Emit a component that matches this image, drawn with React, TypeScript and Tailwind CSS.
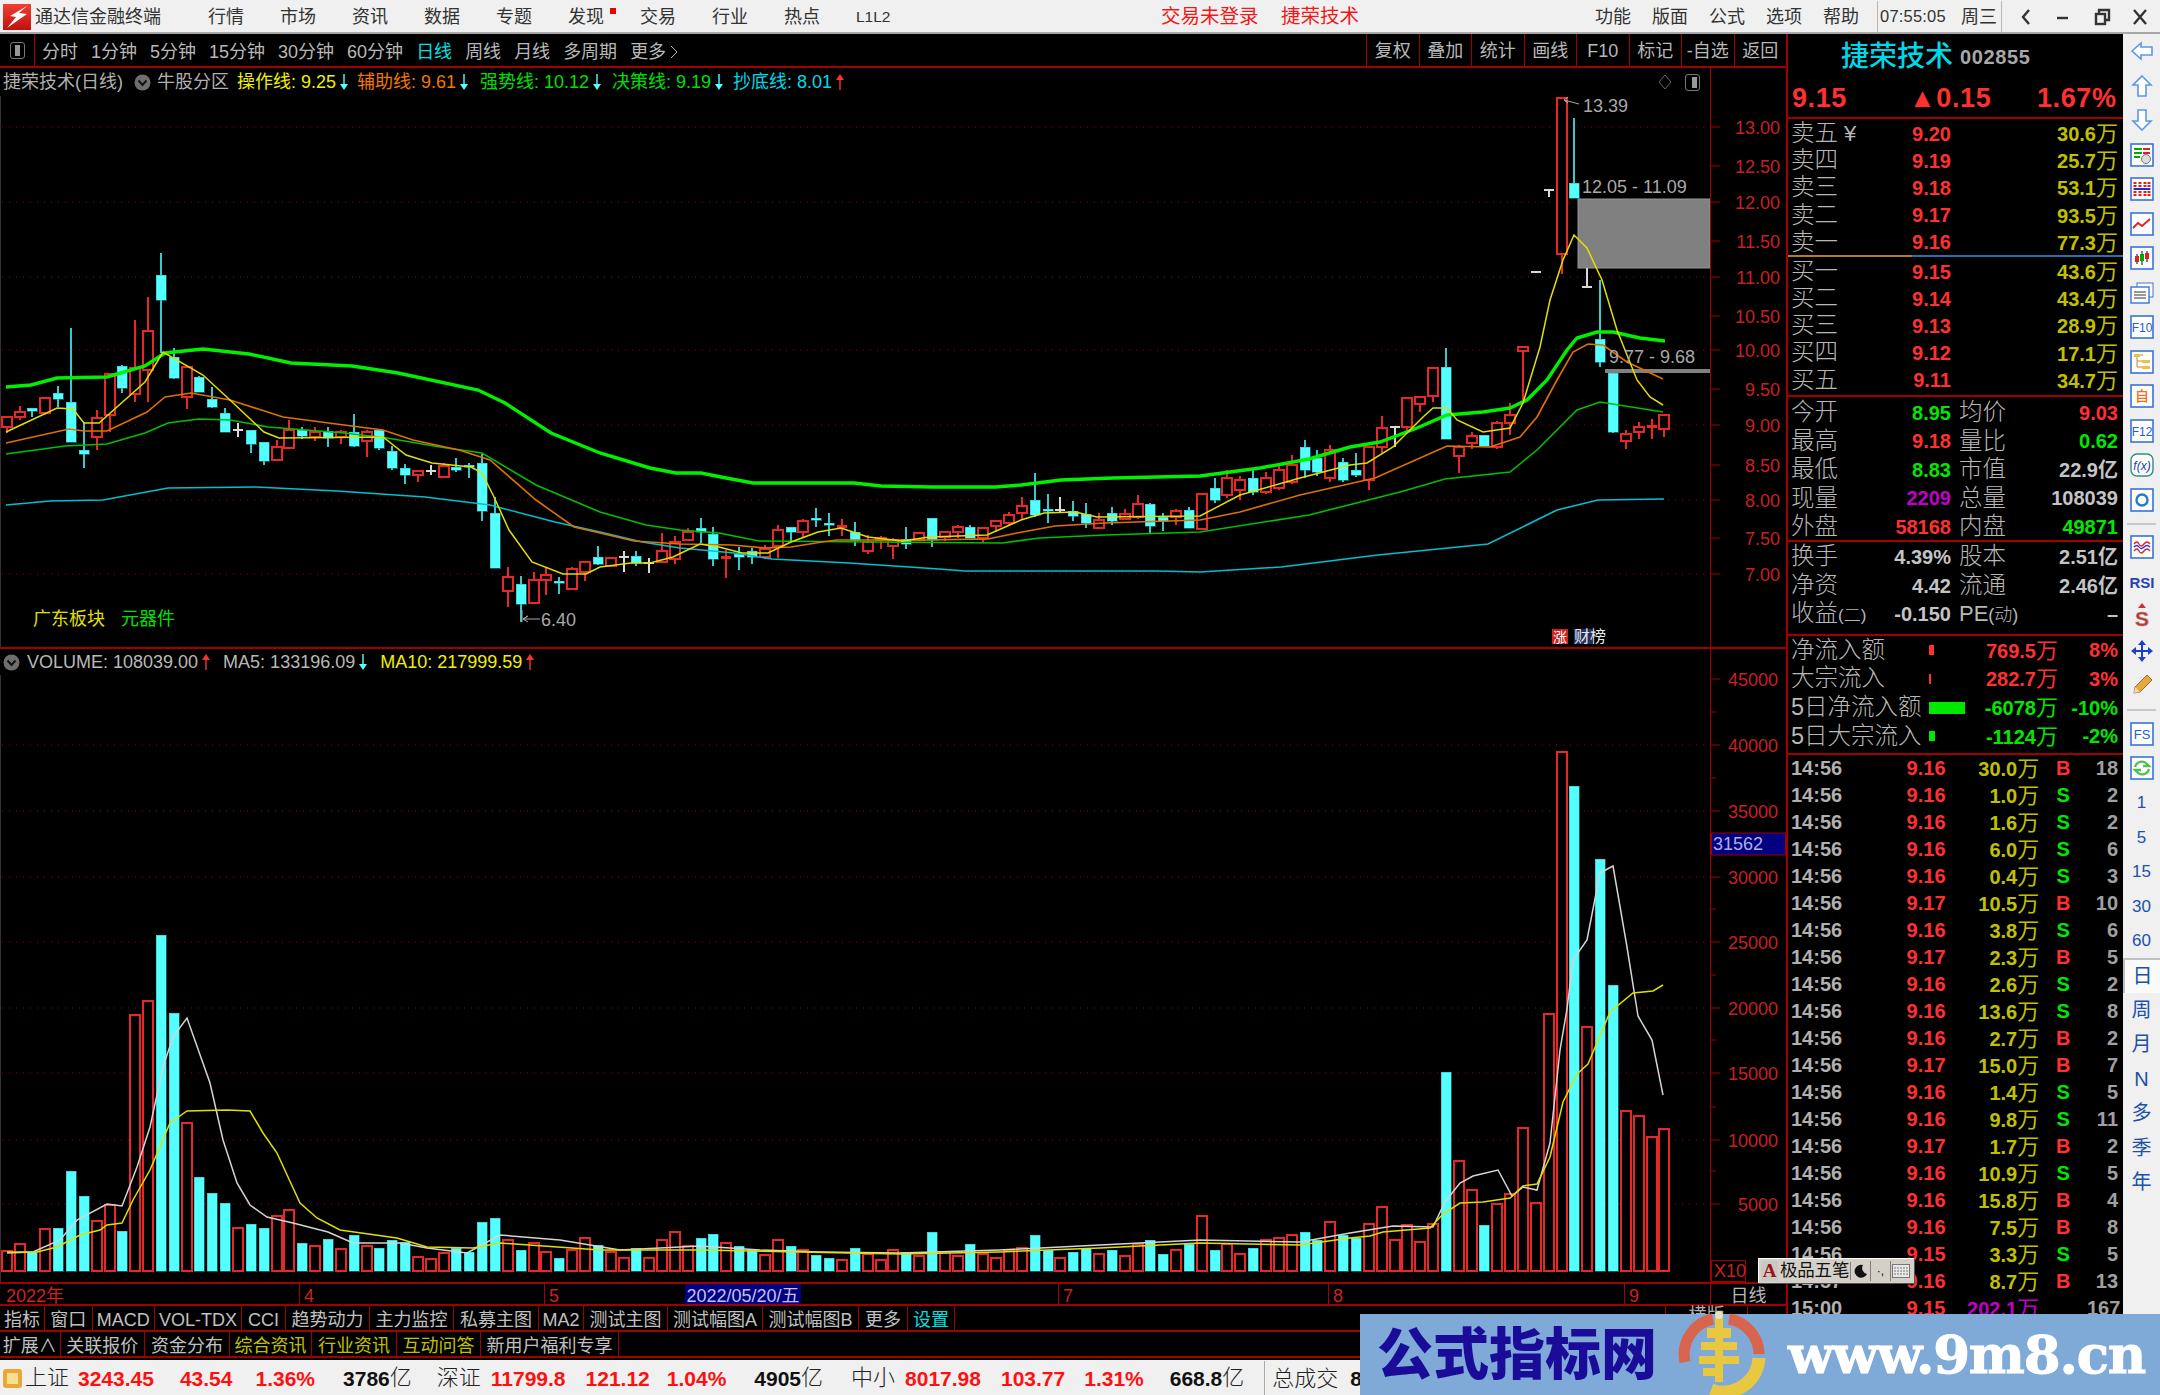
import { ReactNode } from "react";

// [kind, bodyTop, bodyBottom, high, low] in page pixels. r hollow red, c cyan, w white doji, f red filled
type Candle = [string, number, number, number, number];
const candles: Candle[] = [
  ["r",417,427,417,433],["r",412,417,406,420],["c",408,411,408,417],["r",398,413,397,415],["c",393,399,386,407],
  ["c",402,442,328,442],["c",450,454,422,468],["r",418,437,410,450],["r",374,415,374,432],["c",366,388,365,393],
  ["r",368,394,320,402],["r",331,370,297,402],["c",275,300,253,353],["c",357,378,348,379],["r",367,397,367,409],
  ["c",377,392,376,392],["c",399,407,387,408],["c",413,432,408,432],["w",430,430,423,437],["c",430,444,430,453],
  ["c",442,461,442,465],["r",447,460,440,460],["r",430,448,420,448],["c",430,436,427,439],["r",432,437,427,441],
  ["c",431,438,427,447],["r",432,437,430,444],["c",432,446,414,447],["r",432,441,430,457],["c",430,448,429,450],
  ["c",451,468,446,470],["c",468,475,464,484],["r",471,475,471,482],["w",471,471,465,475],["r",466,477,463,477],
  ["c",467,470,458,472],["c",465,466,463,478],["c",463,511,454,521],["c",513,568,497,568],["r",577,591,567,607],
  ["c",584,604,576,622],["r",580,603,572,603],["r",575,580,568,595],["c",581,583,577,594],["r",569,589,567,589],
  ["r",562,572,562,581],["c",557,564,546,565],["r",558,566,558,566],["w",557,557,551,572],["c",556,563,551,566],
  ["w",563,563,558,573],["r",551,562,533,562],["r",542,559,536,564],["r",532,540,528,540],["c",528,532,518,543],
  ["c",534,559,527,566],["f",556,558,550,578],["c",554,557,547,570],["c",551,557,548,564],["r",549,557,545,559],
  ["r",530,546,525,558],["c",527,532,527,542],["r",521,532,519,538],["c",518,519,508,527],["c",523,525,513,536],
  ["f",525,527,519,536],["c",532,540,522,546],["r",542,551,535,554],["r",538,540,536,549],["r",540,546,538,559],
  ["c",539,544,527,549],["r",533,540,533,541],["c",518,540,518,547],["r",532,537,532,541],["r",527,532,525,538],
  ["c",527,538,525,538],["r",528,538,528,543],["r",521,526,521,532],["r",515,523,512,526],["r",506,513,497,520],
  ["c",500,515,473,517],["c",509,511,494,523],["w",510,510,497,513],["c",511,516,501,521],["c",514,523,503,528],
  ["r",520,528,513,528],["c",513,521,507,525],["r",514,519,509,519],["r",504,517,495,519],["c",504,526,503,533],
  ["c",517,521,513,531],["r",511,517,509,525],["c",510,528,507,528],["r",494,529,494,529],["c",488,500,478,503],
  ["r",478,495,470,498],["r",480,490,476,500],["c",478,492,470,495],["r",478,492,472,494],["r",470,488,465,490],
  ["r",465,482,455,484],["c",447,470,440,478],["c",458,472,450,476],["r",450,478,445,482],["c",462,480,458,482],
  ["c",470,475,453,477],["r",447,480,447,490],["r",428,447,416,453],["w",427,427,426,447],["r",398,427,398,432],
  ["r",397,404,397,412],["r",368,396,368,402],["c",367,439,348,439],["r",447,456,445,473],["r",436,443,432,449],
  ["c",435,446,435,446],["r",423,447,421,449],["r",415,423,403,435],["r",347,351,347,400],["w",272,272,272,272],
  ["w",190,190,190,197],["r",98,254,98,274],["c",183,198,118,198],["w",287,287,268,287],["c",339,362,280,367],
  ["c",373,432,373,433],["r",434,441,430,449],["r",427,432,422,439],["f",425,427,419,439],["r",415,429,415,437],
];

// tops of the volume bars, one per candle
const volTops = [
  1251,1244,1252,1229,1228,1171,1196,1221,1205,1231,1015,1001,935,1013,1123,1177,1193,1203,1228,1224,
  1228,1216,1210,1243,1246,1239,1249,1235,1246,1248,1240,1242,1257,1259,1253,1248,1252,1222,1218,
  1240,1250,1243,1252,1258,1250,1238,1245,1252,1258,1248,1258,1240,1232,1246,1238,1234,1243,1246,1250,1255,
  1240,1246,1250,1255,1258,1260,1248,1254,1260,1250,1252,1256,1232,1252,1256,1244,1254,1258,1250,1248,1235,
  1250,1258,1252,1248,1254,1250,1256,1244,1240,1254,1250,1244,1216,1250,1244,1254,1248,1240,1238,1235,1232,
  1240,1222,1235,1238,1224,1207,1240,1225,1242,1224,1072,1161,1190,1225,1204,1194,1128,1203,1014,752,786,
  1027,859,985,1111,1116,1137,1129,
];

const brightGreen = [6,387,31,385,57,378,107,377,145,366,165,353,203,349,249,354,291,363,352,366,398,373,478,390,505,403,551,433,600,453,650,468,676,473,701,473,726,478,753,483,778,483,803,483,854,483,881,486,932,487,996,487,1021,485,1061,480,1113,478,1200,476,1260,468,1309,459,1350,447,1380,442,1417,428,1447,415,1483,412,1510,408,1527,400,1547,380,1567,350,1577,338,1597,332,1613,332,1640,338,1665,341];
const orangeLine = [6,443,69,429,84,431,107,431,147,412,165,397,191,393,230,400,283,417,344,425,383,430,413,440,459,450,490,460,536,500,574,527,600,533,634,541,680,544,732,545,765,548,791,547,822,542,837,540,925,540,988,539,1017,533,1055,526,1105,523,1200,520,1240,512,1300,495,1375,478,1447,446,1490,447,1520,437,1537,417,1557,380,1573,352,1588,344,1603,345,1627,362,1663,379];
const greenLine = [6,454,65,446,107,444,145,433,168,423,199,419,230,420,268,427,344,433,387,438,440,447,482,453,536,485,600,512,646,525,680,530,719,533,759,541,876,542,1002,543,1040,538,1105,535,1200,532,1309,515,1400,492,1445,479,1510,472,1537,450,1577,410,1600,402,1663,412];
const yellowLine = [6,432,57,408,73,409,84,423,99,423,145,382,163,352,203,375,230,400,264,432,279,438,383,437,406,455,432,463,471,467,482,473,494,497,509,530,532,562,563,574,586,574,600,567,631,563,650,563,673,557,700,544,719,547,742,553,768,553,791,542,818,532,841,528,868,537,902,541,929,537,987,535,1021,520,1044,513,1075,512,1097,517,1200,516,1240,495,1300,478,1350,465,1367,463,1393,447,1423,417,1433,408,1447,408,1457,420,1483,432,1510,428,1523,403,1540,347,1550,300,1563,260,1574,235,1587,248,1602,280,1617,330,1637,380,1650,397,1663,405];
const cyanLine = [6,505,50,501,103,500,168,488,256,487,337,491,425,497,490,505,555,522,600,532,642,542,680,548,734,553,772,559,849,563,939,569,965,571,1157,571,1200,572,1281,567,1378,555,1488,544,1557,510,1598,500,1664,499];
const volWhite = [7,1253,33,1252,60,1240,77,1220,107,1204,122,1206,137,1167,150,1127,163,1067,173,1037,187,1018,210,1083,223,1140,237,1183,250,1205,267,1217,293,1223,328,1232,353,1243,400,1243,427,1248,467,1253,500,1235,560,1240,620,1250,700,1246,760,1250,820,1252,900,1253,1000,1250,1100,1245,1200,1240,1300,1242,1350,1233,1393,1226,1433,1227,1445,1202,1460,1183,1473,1176,1498,1170,1512,1196,1523,1187,1537,1190,1550,1143,1560,1050,1567,1009,1573,960,1587,940,1600,873,1613,866,1627,947,1638,1016,1652,1040,1663,1095];
const volYellow = [7,1252,37,1252,57,1247,80,1235,100,1230,107,1225,122,1223,133,1200,150,1170,170,1123,187,1111,227,1110,250,1111,263,1133,277,1153,300,1203,317,1218,340,1230,397,1238,427,1247,473,1248,500,1243,600,1250,700,1250,800,1252,900,1254,1000,1252,1100,1248,1200,1243,1300,1245,1350,1238,1370,1236,1383,1232,1430,1228,1443,1214,1460,1203,1483,1202,1510,1198,1523,1186,1537,1184,1550,1157,1563,1102,1577,1074,1588,1064,1610,1012,1633,993,1653,991,1663,985];

const pts = (a: number[]) => {
  const out: string[] = [];
  for (let i = 0; i < a.length; i += 2) out.push(`${a[i]},${a[i + 1]}`);
  return out.join(" ");
};
const barX = (i: number) => Math.round(6.7 + 12.85 * i);

const RED = "#e82828";
const CYAN = "#54ffff";
const WICK = "#38c8d0";

const priceTicks: [string, number][] = [["13.00",127],["12.50",166],["12.00",202],["11.50",241],["11.00",277],["10.50",316],["10.00",350],["9.50",389],["9.00",425],["8.50",465],["8.00",500],["7.50",538],["7.00",574]];
const volTicks: [string, number][] = [["45000",679],["40000",745],["35000",811],["30000",877],["25000",942],["20000",1008],["15000",1073],["10000",1140],["5000",1204]];

const PriceChart = () => (
  <svg width="1710" height="551" viewBox="0 96 1710 551" className="block">
    <line x1="0.5" x2="0.5" y1="96" y2="647" stroke="#333" />
    {[127, 202, 277, 350, 425, 500, 574].map((y) => (
      <line key={y} x1="2" x2="1710" y1={y} y2={y} stroke="#a00000" strokeDasharray="1 6" />
    ))}
    <rect x="1578" y="199" width="132" height="69" fill="#808080" stroke="#969696" />
    <rect x="1605" y="369" width="105" height="4" fill="#808080" />
    <g shapeRendering="crispEdges">
      {candles.map(([k, top, bot, hi, lo], i) => {
        const x = barX(i);
        const wick = k === "c" ? WICK : k === "w" ? "#d8d8d8" : RED;
        return (
          <g key={i}>
            {hi < lo && <line x1={x} x2={x} y1={hi} y2={lo} stroke={wick} strokeWidth="1.5" />}
            {k === "w" && <line x1={x - 5} x2={x + 5} y1={top} y2={top} stroke={wick} strokeWidth="1.5" />}
            {k === "c" && <rect x={x - 5} y={top} width="10" height={Math.max(bot - top, 2)} fill={CYAN} stroke="#30b0b8" strokeWidth="0.5" />}
            {k === "r" && <rect x={x - 5} y={top} width="10" height={bot - top} fill="#000" stroke={RED} strokeWidth="1.2" />}
            {k === "f" && <rect x={x - 5} y={top} width="10" height={bot - top + 1} fill={RED} />}
          </g>
        );
      })}
    </g>
    <polyline points={pts(cyanLine)} fill="none" stroke="#00c0d0" strokeWidth="1.6" />
    <polyline points={pts(greenLine)} fill="none" stroke="#00c000" strokeWidth="1.6" />
    <polyline points={pts(orangeLine)} fill="none" stroke="#e07000" strokeWidth="1.6" />
    <polyline points={pts(brightGreen)} fill="none" stroke="#00f000" strokeWidth="3.4" />
    <polyline points={pts(yellowLine)} fill="none" stroke="#e0e000" strokeWidth="1.5" />

    <g fontSize="18" fill="#a8a8a8">
      <polyline points="1579,104 1564,100 1568,103 1564,100 1568,97" fill="none" stroke="#a8a8a8" />
      <text x="1583" y="112">13.39</text>
      <text x="1582" y="193">12.05 - 11.09</text>
      <text x="1609" y="363">9.77 - 9.68</text>
      <polyline points="540,619 523,619 528,616 523,619 528,622" fill="none" stroke="#a8a8a8" />
      <line x1="522" x2="522" y1="610" y2="622" stroke="#a8a8a8" />
      <text x="541" y="626">6.40</text>
    </g>
    <text x="33" y="625" fontSize="18" fill="#e0e000">广东板块</text>
    <text x="121" y="625" fontSize="18" fill="#00e000">元器件</text>
    <rect x="1552" y="629" width="16" height="15" fill="#d02020" />
    <text x="1553" y="642" fontSize="14" fill="#fff">涨</text>
    <rect x="1574" y="629" width="18" height="15" fill="#203060" />
    <text x="1574" y="642" fontSize="16" fill="#e8e8e8">财榜</text>
  </svg>
);

const VolumeChart = () => (
  <svg width="1710" height="607" viewBox="0 675 1710 607" className="block">
    <line x1="0.5" x2="0.5" y1="675" y2="1282" stroke="#333" />
    {[745, 811, 877, 942, 1008, 1073, 1140, 1204].map((y) => (
      <line key={y} x1="2" x2="1710" y1={y} y2={y} stroke="#a00000" strokeDasharray="1 6" />
    ))}
    <g shapeRendering="crispEdges">
      {volTops.map((top, i) => {
        const x = barX(i);
        const cyan = candles[i][0] === "c";
        return cyan ? (
          <rect key={i} x={x - 5} y={top} width="10" height={1271 - top} fill={CYAN} stroke="#30b0b8" strokeWidth="0.5" />
        ) : (
          <rect key={i} x={x - 5} y={top} width="10" height={1271 - top} fill="#000" stroke={RED} strokeWidth="1.2" />
        );
      })}
    </g>
    <polyline points={pts(volWhite)} fill="none" stroke="#d4d4d4" strokeWidth="1.5" />
    <polyline points={pts(volYellow)} fill="none" stroke="#e0e000" strokeWidth="1.5" />
  </svg>
);

const PriceAxis = () => (
  <svg width="75" height="579" viewBox="1711 68 75 579" className="block shrink-0 self-start">
    {priceTicks.map(([t, y]) => (
      <g key={t}>
        <line x1="1711" x2="1720" y1={y} y2={y} stroke="#a00000" />
        <text x="1780" y={y + 7} textAnchor="end" fontSize="18" fill="#c82020">{t}</text>
      </g>
    ))}
  </svg>
);

const VolumeAxis = () => (
  <svg width="75" height="633" viewBox="1711 649 75 633" className="block shrink-0 self-start">
    {volTicks.map(([t, y]) => (
      <g key={t}>
        <line x1="1711" x2="1720" y1={y} y2={y} stroke="#a00000" />
        <line x1="1711" x2="1716" y1={y - 33} y2={y - 33} stroke="#a00000" />
        <text x="1778" y={y + 7} textAnchor="end" fontSize="18" fill="#c82020">{t}</text>
      </g>
    ))}
    <rect x="1711.5" y="833" width="74" height="22" fill="#000080" stroke="#a00000" />
    <text x="1713" y="850" fontSize="18" fill="#b0b0e0">31562</text>
    <rect x="1711.5" y="1260.5" width="34" height="21" fill="none" stroke="#a00000" />
    <text x="1714" y="1277" fontSize="18" fill="#c82020">X10</text>
  </svg>
);

const Arrow = ({ up }: { up?: boolean }) => (
  <svg width="10" height="16" viewBox="0 0 10 16" className="mx-[3px] shrink-0">
    {up ? (
      <>
        <line x1="5" x2="5" y1="5" y2="16" stroke="#ff3030" strokeWidth="1.4" />
        <polygon points="5,0 9,6 1,6" fill="#ff3030" />
      </>
    ) : (
      <>
        <line x1="5" x2="5" y1="0" y2="11" stroke={CYAN} strokeWidth="1.4" />
        <polygon points="5,16 9,10 1,10" fill={CYAN} />
      </>
    )}
  </svg>
);

const ChevronDisc = () => (
  <svg width="17" height="17" viewBox="0 0 17 17" className="shrink-0">
    <circle cx="8.5" cy="8.5" r="8" fill="#6e6e6e" />
    <polyline points="4.5,6.5 8.5,11 12.5,6.5" fill="none" stroke="#111" strokeWidth="2" />
  </svg>
);

const indicators: [string, string, string, boolean][] = [
  ["操作线: 9.25", "#f0f000", "w-[120px]", false],
  ["辅助线: 9.61", "#f07800", "w-[123px]", false],
  ["强势线: 10.12", "#00e000", "w-[132px]", false],
  ["决策线: 9.19", "#00e000", "w-[121px]", false],
  ["抄底线: 8.01", "#00d8e8", "w-[112px]", true],
];

const topNav = ["行情", "市场", "资讯", "数据", "专题", "发现", "交易", "行业", "热点", "L1L2"];
const rightNav = ["功能", "版面", "公式", "选项", "帮助"];
const periods = ["分时", "1分钟", "5分钟", "15分钟", "30分钟", "60分钟", "日线", "周线", "月线", "多周期"];
const toolCells = ["复权", "叠加", "统计", "画线", "F10", "标记", "-自选", "返回"];

const tabs1: [string, number, string?][] = [
  ["指标",45],["窗口",47.5],["MACD",62.5],["VOL-TDX",87],["CCI",44],["趋势动力",84],["主力监控",84],["私募主图",85],["MA2",45],["测试主图",84],["测试幅图A",95],["测试幅图B",96],["更多",49],["设置",47,"#00e0e0"],
];
const tabs2: [string, number, string?][] = [
  ["扩展∧",60.5],["关联报价",84.5],["资金分布",85],["综合资讯",82,"#c0c000"],["行业资讯",85,"#c0c000"],["互动问答",84,"#c0c000"],["新用户福利专享",138],
];

const Tabs = ({ items, children }: { items: [string, number, string?][]; children?: ReactNode }) => (
  <div className="flex h-[26px] shrink-0 border-b-2 border-[#a00000] text-[18px] leading-none text-[#c0c0c0]">
    {items.map(([t, w, c]) => (
      <div key={t} style={{ width: w, color: c }} className="flex shrink-0 items-center justify-center border-r border-[#a00000] pt-[4px] whitespace-nowrap">
        {t}
      </div>
    ))}
    {children}
  </div>
);

const asks: [string, string, string][] = [
  ["卖五","9.20","30.6"],["卖四","9.19","25.7"],["卖三","9.18","53.1"],["卖二","9.17","93.5"],["卖一","9.16","77.3"],
];
const bids: [string, string, string][] = [
  ["买一","9.15","43.6"],["买二","9.14","43.4"],["买三","9.13","28.9"],["买四","9.12","17.1"],["买五","9.11","34.7"],
];

const R = "#ff3030";
const G = "#00e800";
const W = "#c4c4c4";
const M = "#c000c8";

const stats: [string, string, string, string, string, string][] = [
  ["今开","8.95",G,"均价","9.03",R],
  ["最高","9.18",R,"量比","0.62",G],
  ["最低","8.83",G,"市值","22.9亿",W],
  ["现量","2209",M,"总量","108039",W],
  ["外盘","58168",R,"内盘","49871",G],
];
const flows: [string, number, number, string, string, string][] = [
  ["净流入额",5,10,"769.5","8%",R],
  ["大宗流入",2,10,"282.7","3%",R],
  ["5日净流入额",36,12,"-6078","-10%",G],
  ["5日大宗流入",6,10,"-1124","-2%",G],
];
const ticks: [string, string, string, string, string][] = [
  ["14:56","9.16","30.0","B","18"],["14:56","9.16","1.0","S","2"],["14:56","9.16","1.6","S","2"],["14:56","9.16","6.0","S","6"],
  ["14:56","9.16","0.4","S","3"],["14:56","9.17","10.5","B","10"],["14:56","9.16","3.8","S","6"],["14:56","9.17","2.3","B","5"],
  ["14:56","9.16","2.6","S","2"],["14:56","9.16","13.6","S","8"],["14:56","9.16","2.7","B","2"],["14:56","9.17","15.0","B","7"],
  ["14:56","9.16","1.4","S","5"],["14:56","9.16","9.8","S","11"],["14:56","9.17","1.7","B","2"],["14:56","9.16","10.9","S","5"],
  ["14:56","9.16","15.8","B","4"],["14:56","9.16","7.5","B","8"],["14:56","9.15","3.3","S","5"],["14:57","9.16","8.7","B","13"],
  ["15:00","9.15","202.1","","167"],
];

const Num = ({ children, color, className }: { children: ReactNode; color: string; className?: string }) => (
  <span style={{ color }} className={`text-[20px] font-bold whitespace-nowrap ${className ?? ""}`}>{children}</span>
);

const Wan = ({ children, color }: { children: ReactNode; color: string }) => (
  <span style={{ color }} className="whitespace-nowrap text-[20px] font-bold">
    {children}
    <span className="text-[22px] font-normal">万</span>
  </span>
);

const Cjk = ({ children }: { children: ReactNode }) => (
  <span className="text-[23.5px] font-light whitespace-nowrap text-[#b8b8b8]">{children}</span>
);

const BookRow = ({ row }: { row: [string, string, string] }) => (
  <div className="flex h-[27.2px] items-center pt-[2px]">
    <span className="w-[110px]">
      <Cjk>
        {row[0]}
        {row[0] === "卖五" && <span className="ml-[6px] text-[22px]">¥</span>}
      </Cjk>
    </span>
    <Num color={R} className="w-[50px] text-right">{row[1]}</Num>
    <span className="flex-1 text-right"><Wan color="#c0c000">{row[2]}</Wan></span>
  </div>
);

const RightPanel = () => (
  <div className="flex h-full w-[337px] shrink-0 flex-col overflow-hidden border-l-2 border-[#a00000] pr-[5px]">
    <div className="-mr-[5px] h-[85px] shrink-0 border-b-2 border-[#a00000] pr-[6px]">
      <div className="mt-[2px] flex h-[42px] items-center pl-[53px]">
        <span className="text-[28px] leading-none font-medium text-[#00d8e8]">捷荣技术</span>
        <span className="ml-[7px] text-[20px] font-bold tracking-[0.6px] text-[#a8a8a8]">002855</span>
      </div>
      <div className="mt-[7px] flex items-center pl-[4px] text-[27px] leading-none font-bold tracking-[0.6px] text-[#ff3030]">
        <span className="w-[117px]">9.15</span>
        <span className="w-[128px]">▲0.15</span>
        <span>1.67%</span>
      </div>
    </div>
    <div className="shrink-0 pl-[3px]">
      {asks.map((r) => <BookRow key={r[0]} row={r} />)}
    </div>
    <div className="-mr-[5px] flex h-[2px] shrink-0">
      <div className="w-[124px] bg-[#b08020]" />
      <div className="flex-1 bg-[#2870b0]" />
    </div>
    <div className="shrink-0 pl-[3px]">
      {bids.map((r) => <BookRow key={r[0]} row={r} />)}
    </div>
    <div className="-mr-[5px] mt-[2px] h-[2px] shrink-0 bg-[#a00000]" />
    <div className="shrink-0 pl-[3px]">
      {stats.map((s) => (
        <div key={s[0]} className="flex h-[28.6px] items-center pt-[3px]">
          <div className="flex w-[160px] items-center justify-between">
            <Cjk>{s[0]}</Cjk>
            <Num color={s[2]}>{s[1]}</Num>
          </div>
          <div className="ml-[8px] flex flex-1 items-center justify-between">
            <Cjk>{s[3]}</Cjk>
            <Num color={s[5]}>{s[4]}</Num>
          </div>
        </div>
      ))}
    </div>
    <div className="-mr-[5px] h-[2px] shrink-0 bg-[#a00000]" />
    <div className="shrink-0 pt-[1px] pb-[5.5px] pl-[3px]">
      <div className="flex h-[28.5px] items-center">
        <div className="flex w-[160px] items-center justify-between">
          <Cjk>换手</Cjk>
          <Num color={W}>4.39%</Num>
        </div>
        <div className="ml-[8px] flex flex-1 items-center justify-between">
          <Cjk>股本</Cjk>
          <Num color={W}>2.51亿</Num>
        </div>
      </div>
      <div className="flex h-[28.5px] items-center">
        <div className="flex w-[160px] items-center justify-between">
          <Cjk>净资</Cjk>
          <Num color={W}>4.42</Num>
        </div>
        <div className="ml-[8px] flex flex-1 items-center justify-between">
          <Cjk>流通</Cjk>
          <Num color={W}>2.46亿</Num>
        </div>
      </div>
      <div className="flex h-[28.5px] items-center">
        <div className="flex w-[160px] items-center justify-between">
          <Cjk>收益<span className="text-[17px]">(二)</span></Cjk>
          <Num color={W}>-0.150</Num>
        </div>
        <div className="ml-[8px] flex flex-1 items-center justify-between">
          <Cjk><span className="text-[22px]">PE</span><span className="text-[18px]">(动)</span></Cjk>
          <Num color={W}>–</Num>
        </div>
      </div>
    </div>
    <div className="-mr-[5px] h-[2px] shrink-0 bg-[#a00000]" />
    <div className="shrink-0 pb-[2px] pl-[3px]">
      {flows.map((f) => (
        <div key={f[0]} className="flex h-[28.7px] items-center">
          <span className="w-[138px]"><Cjk>{f[0]}</Cjk></span>
          <span className="flex w-[46px] items-center">
            <span style={{ width: f[1], height: f[2], background: f[5] }} className="block" />
          </span>
          <span className="w-[83px] text-right"><Wan color={f[5]}>{f[3]}</Wan></span>
          <span className="flex-1 text-right"><Num color={f[5]}>{f[4]}</Num></span>
        </div>
      ))}
    </div>
    <div className="-mr-[5px] h-[2px] shrink-0 bg-[#a00000]" />
    <div className="shrink-0 pl-[3px]">
      {ticks.map((t, i) => (
        <div key={i} className="flex h-[27px] items-center">
          <Num color="#b0b0b0" className="w-[105px]">{t[0]}</Num>
          <Num color={R} className="w-[50px] text-right">{t[1]}</Num>
          <span className="w-[94px] text-right"><Wan color={t[3] ? "#c0c000" : M}>{t[2]}</Wan></span>
          <span style={{ color: t[3] === "B" ? R : G }} className="w-[48px] text-center text-[20px] font-bold">{t[3]}</span>
          <span className="w-[31px] text-right"><Num color="#a0a0a0">{t[4]}</Num></span>
        </div>
      ))}
    </div>
  </div>
);

// sidebar glyph boxes, each 24x24
const BOX = "#3a74d8";
const Box = ({ children }: { children: ReactNode }) => (
  <svg width="24" height="24" viewBox="0 0 24 24">
    <rect x="1" y="1" width="22" height="22" fill="#fff" stroke={BOX} strokeWidth="1.6" />
    {children}
  </svg>
);
const Hollow = ({ points }: { points: string }) => (
  <svg width="24" height="24" viewBox="0 0 24 24">
    <polygon points={points} fill="#fff" stroke="#5a98e8" strokeWidth="1.6" />
  </svg>
);
const Label = ({ t, c, s }: { t: string; c?: string; s?: number }) => (
  <text x="12" y="17" textAnchor="middle" fontSize={s ?? 14} fontWeight="500" fill={c ?? "#2060d0"}>{t}</text>
);

const sideIcons: ReactNode[] = [
  <Hollow points="2,12 11,4 11,8 22,8 22,16 11,16 11,20" />,
  <Hollow points="12,2 21,11 16,11 16,22 8,22 8,11 3,11" />,
  <Hollow points="12,22 21,13 16,13 16,2 8,2 8,13 3,13" />,
  <Box><path d="M4 6h8M4 10h8M4 14h6" stroke="#0a0" strokeWidth="2" /><path d="M13 6h7M13 10h7" stroke="#e02020" strokeWidth="2" /><circle cx="16" cy="16" r="4.5" fill="#ddd" stroke="#777" /></Box>,
  <Box><path d="M5 5v14M10 5v14M15 5v14M19 5v14" stroke="#e02020" strokeWidth="3" strokeDasharray="2 1" /><path d="M4 12h16" stroke="#2030d0" strokeWidth="2" /></Box>,
  <Box><polyline points="3,16 8,11 12,14 20,7" fill="none" stroke="#e02020" strokeWidth="1.8" /></Box>,
  <Box><path d="M7 8v10M12 5v14M17 5v11" stroke="#000" /><rect x="5" y="10" width="4" height="6" fill="#e02020" /><rect x="10" y="8" width="4" height="7" fill="#0a0" /><rect x="15" y="7" width="4" height="6" fill="#e02020" /></Box>,
  <svg width="24" height="24" viewBox="0 0 24 24"><rect x="7" y="2" width="16" height="14" fill="#fff" stroke={BOX} /><rect x="1" y="6" width="18" height="16" fill="#fff" stroke={BOX} strokeWidth="1.4" /><path d="M4 11h12M4 14h12M4 17h12" stroke="#777" strokeWidth="1.4" /></svg>,
  <Box><Label t="F10" s={12} /></Box>,
  <Box><path d="M7 5h6M7 5v12M7 11h7M7 17h7" stroke="#c09020" /><rect x="4" y="4" width="6" height="3" fill="#f0c040" /><rect x="12" y="10" width="8" height="3" fill="#f0c040" /><rect x="12" y="16" width="8" height="3" fill="#f0c040" /></Box>,
  <Box><Label t="自" c="#f07020" /></Box>,
  <Box><Label t="F12" s={12} /></Box>,
  <svg width="24" height="24" viewBox="0 0 24 24"><rect x="1" y="1" width="22" height="22" rx="6" fill="#fff" stroke="#309080" strokeWidth="1.4" /><text x="12" y="17" textAnchor="middle" fontSize="12" fontStyle="italic" fill="#2040b0">f(x)</text></svg>,
  <Box><circle cx="12" cy="12" r="5.5" fill="none" stroke="#2878d0" strokeWidth="2.4" /></Box>,
];
const sideIcons2: ReactNode[] = [
  <Box><path d="M4 9q3-4 5 0t5 0 6 0M4 16q3-4 5 0t5 0 6 0" fill="none" stroke="#e02020" strokeWidth="1.3" /><path d="M4 12q3-3 5 0t5 0 6 0" fill="none" stroke="#2030d0" strokeWidth="1.3" /></Box>,
  <svg width="30" height="24" viewBox="0 0 30 24"><text x="15" y="18" textAnchor="middle" fontSize="15" fontWeight="700" fill="#2a40b0">RSI</text></svg>,
  <svg width="24" height="26" viewBox="0 0 24 26"><polygon points="12,0 16,5 8,5" fill="#d03030" /><text x="12" y="23" textAnchor="middle" fontSize="21" fontWeight="700" fill="#d03030" stroke="#999" strokeWidth="0.5">S</text></svg>,
  <svg width="24" height="24" viewBox="0 0 24 24"><path d="M12 1l4 5h-3v5h5V8l5 4-5 4v-3h-5v5h3l-4 5-4-5h3v-5H6v3l-5-4 5-4v3h5V6H8z" fill="#1a40c8" /></svg>,
  <svg width="24" height="24" viewBox="0 0 24 24"><path d="M4 20l1-6L17 2l5 5L10 19z" fill="#e8a840" stroke="#a06820" /><path d="M4 20l1-6 5 5z" fill="#f0d8b0" /></svg>,
];
const sideIcons3: ReactNode[] = [
  <Box><text x="12" y="17" textAnchor="middle" fontSize="13" fill="#2060d0">FS</text></Box>,
  <Box><path d="M5 11a7 7 0 0 1 12-3l2 2h-6M19 13a7 7 0 0 1-12 3l-2-2h6" fill="none" stroke="#50c050" strokeWidth="2.4" /></Box>,
];

const Sidebar = () => (
  <div className="flex w-[37px] shrink-0 flex-col items-center bg-[#f0f0f0] text-[#2050a8]">
    {sideIcons.map((ic, i) => <div key={i} className="flex h-[34.5px] shrink-0 items-center justify-center">{ic}</div>)}
    <div className="flex h-[13px] w-full shrink-0 items-center px-[4px]"><div className="h-[2px] w-full bg-[#c8c8c8]" /></div>
    {sideIcons2.map((ic, i) => <div key={i} className="flex h-[34.5px] shrink-0 items-center justify-center">{ic}</div>)}
    <div className="flex h-[14px] w-full shrink-0 items-center px-[4px]"><div className="h-[2px] w-full bg-[#c8c8c8]" /></div>
    {sideIcons3.map((ic, i) => <div key={i} className="flex h-[34.5px] shrink-0 items-center justify-center">{ic}</div>)}
    {["1", "5", "15", "30", "60"].map((t) => (
      <div key={t} className="flex h-[34.5px] shrink-0 items-center justify-center text-[17px]">{t}</div>
    ))}
    <div className="flex h-[34.5px] w-full shrink-0 items-center justify-center border-t-2 border-l-2 border-[#c0c0c0] bg-[#fafafa] text-[20px]">日</div>
    {["周", "月", "N", "多", "季", "年"].map((t) => (
      <div key={t} className="flex h-[34.5px] shrink-0 items-center justify-center text-[20px]">{t}</div>
    ))}
  </div>
);

const Cell = ({ w, children, className }: { w: number; children?: ReactNode; className?: string }) => (
  <div style={{ width: w }} className={`flex shrink-0 items-center pt-[3px] ${className ?? ""}`}>{children}</div>
);

const Watermark = () => (
  <div className="absolute top-[1314px] left-[1360px] flex h-[81px] w-[800px] items-center bg-[#7faad8]">
    <span className="ml-[17px] text-[56px] leading-none font-black text-[#1a0c98]">公式指标网</span>
    <svg width="90" height="90" viewBox="0 0 90 90" className="ml-[20px] shrink-0">
      <path d="M8 52A36 36 0 0 1 36 9" fill="none" stroke="#d8644e" strokeWidth="11" />
      <path d="M52 9A36 36 0 0 1 82 44" fill="none" stroke="#d8644e" strokeWidth="11" />
      <path d="M82 48A36 36 0 0 1 34 80" fill="none" stroke="#e8c840" strokeWidth="13" />
      <rect x="30" y="18" width="24" height="10" fill="#e8c840" />
      <rect x="24" y="32" width="36" height="8" fill="#e8c840" />
      <rect x="38" y="6" width="8" height="66" fill="#e8c840" />
      <rect x="22" y="46" width="40" height="8" fill="#e8c840" />
      <rect x="26" y="58" width="14" height="8" fill="#e8c840" />
      <circle cx="42" cy="5" r="4" fill="#e8e0c0" />
    </svg>
    <span className="ml-[21px] font-['DejaVu_Serif',serif] text-[53px] leading-none font-bold tracking-[-1.2px] text-white [-webkit-text-stroke:1px_white]">www.9m8.cn</span>
  </div>
);

const ImeBar = () => (
  <div className="absolute top-[1258px] left-[1758px] flex h-[25px] w-[156px] items-center border-t border-l border-white bg-[#d4d0c8] pl-[2px] shadow-[1px_1px_0_#555]">
    <span className="mr-[2px] flex h-[20px] w-[17px] items-center justify-center bg-[#c8c8c8] font-['Liberation_Serif',serif] text-[19px] font-bold text-[#a01010]">A</span>
    <span className="w-[71px] border-r border-[#808080] text-[17.5px] leading-none tracking-[-0.2px] whitespace-nowrap text-[#111]">极品五笔</span>
    <span className="flex h-[20px] w-[20px] items-center justify-center border-r border-[#808080]">
      <svg width="14" height="14" viewBox="0 0 14 14"><path d="M9 1a6.5 6.5 0 1 0 4 9 6 6 0 0 1-4-9z" fill="#111" /></svg>
    </span>
    <span className="flex h-[20px] w-[20px] items-center justify-center border-r border-[#808080] text-[12px] leading-none text-[#111]">·,</span>
    <span className="flex h-[20px] w-[20px] items-center justify-center">
      <svg width="18" height="14" viewBox="0 0 18 14"><rect x="0.5" y="0.5" width="17" height="13" fill="#e8e8e8" stroke="#777" /><path d="M2 4h14M2 7h14M2 10h14" stroke="#777" strokeDasharray="2 1" /></svg>
    </span>
  </div>
);

export default function App() {
  return (
    <div className="relative flex h-[1395px] w-[2160px] flex-col overflow-hidden bg-black font-['Liberation_Sans','Noto_Sans_CJK_SC',sans-serif]">
      {/* Menu bar */}
      <div className="flex h-[34px] shrink-0 items-center border-b-2 border-[#a8a8a8] bg-[#f0f0f0] pt-[1px] text-[18px] leading-none whitespace-nowrap text-[#333]">
        <svg width="28" height="26" viewBox="0 0 28 26" className="ml-[3px] shrink-0">
          <defs>
            <linearGradient id="lg" x1="0" y1="0" x2="0" y2="1">
              <stop offset="0" stopColor="#f04030" />
              <stop offset="1" stopColor="#c01010" />
            </linearGradient>
          </defs>
          <rect width="28" height="26" fill="url(#lg)" />
          <path d="M24 2L7 12l6 1-9 11 20-14-8-1z" fill="#fff" />
        </svg>
        <span className="ml-[4px] w-[125px]">通达信金融终端</span>
        <div className="ml-[48px] flex items-center">
          {topNav.map((t) => (
            <span key={t} className={`relative mr-[36px] w-[36px] ${t === "L1L2" ? "text-[15.5px]" : ""}`}>
              {t}
              {t === "发现" && <span className="absolute top-[0px] left-[42px] h-[6px] w-[6px] bg-[#e80000]" />}
            </span>
          ))}
        </div>
        <span className="ml-[233px] w-[98px] text-[19.5px] text-[#f01818]">交易未登录</span>
        <span className="ml-[22px] w-[78px] text-[19.5px] text-[#f01818]">捷荣技术</span>
        <div className="ml-[236px] flex gap-[21px]">
          {rightNav.map((t) => <span key={t} className="w-[36px]">{t}</span>)}
        </div>
        <div className="ml-[18px] flex h-full items-center border-x border-[#b8b8b8] pr-[4px] pl-[2px]">
          <span className="w-[74px] text-[16.5px] tracking-[0.2px]">07:55:05</span>
          <span className="ml-[7px]">周三</span>
        </div>
        <svg width="130" height="20" viewBox="0 0 130 20" className="ml-[18px] shrink-0" stroke="#333" strokeWidth="2.4" fill="none">
          <polyline points="9,3 3,10 9,17" />
          <line x1="37" x2="48" y1="11" y2="11" />
          <rect x="76" y="7" width="9" height="10" />
          <polyline points="79,6 79,3 89,3 89,13 86,13" />
          <path d="M114 3l12 14M126 3l-12 14" />
        </svg>
      </div>

      <div className="flex h-[1326px] shrink-0">
        {/* Left: charts */}
        <div className="flex w-[1786px] shrink-0 flex-col">
          <div className="flex h-[34px] shrink-0 items-center border-b-2 border-[#a00000] text-[18px] leading-none whitespace-nowrap text-[#b8b8b8]">
            <div className="flex h-full w-[35px] items-center justify-center border-r border-[#a00000]">
              <span className="flex h-[17px] w-[15px] items-center justify-center rounded-[3px] border border-[#777]">
                <span className="h-[11px] w-[5px] bg-[#999]" />
              </span>
            </div>
            <div className="ml-[7px] flex items-center gap-[13px] pt-[3px]">
              {periods.map((p) => (
                <span key={p} className={p === "日线" ? "text-[#00e0e0]" : ""}>{p}</span>
              ))}
              <span className="flex items-center">
                更多
                <svg width="10" height="16" viewBox="0 0 10 16" className="ml-[3px]"><polyline points="2,2 8,8 2,14" fill="none" stroke="#b8b8b8" /></svg>
              </span>
            </div>
            <div className="ml-auto flex h-full">
              {toolCells.map((t) => (
                <div key={t} className="flex h-full w-[52.5px] items-center justify-center border-l border-[#a00000] pt-[2px]">{t}</div>
              ))}
            </div>
          </div>

          {/* Price pane */}
          <div className="flex h-[579px] shrink-0">
            <div className="w-[1711px] shrink-0 border-r border-[#a00000]">
              <div className="flex h-[28px] items-center pl-[3px] text-[18px] leading-none whitespace-nowrap text-[#b0b0b0]">
                <span className="w-[131px]">捷荣技术(日线)</span>
                <ChevronDisc />
                <span className="ml-[6px] w-[80px]">牛股分区</span>
                {indicators.map(([t, c, w, up]) => (
                  <span key={t} className={`flex items-center ${w}`} style={{ color: c }}>
                    {t}
                    <Arrow up={up} />
                  </span>
                ))}
                <svg width="16" height="16" viewBox="0 0 16 16" className="ml-[812px] shrink-0">
                  <polygon points="8,1 14,8 8,15 2,8" fill="none" stroke="#666" />
                </svg>
                <span className="ml-[12px] flex h-[17px] w-[15px] items-center justify-end rounded-[3px] border border-[#777] pr-[2px]">
                  <span className="h-[11px] w-[5px] bg-[#999]" />
                </span>
              </div>
              <PriceChart />
            </div>
            <PriceAxis />
          </div>

          {/* Volume pane */}
          <div className="flex h-[635px] shrink-0 border-t-2 border-[#a00000]">
            <div className="w-[1711px] shrink-0 border-r border-[#a00000]">
              <div className="flex h-[26px] items-center pl-[3px] text-[18px] leading-none whitespace-nowrap text-[#b8b8b8]">
                <ChevronDisc />
                <span className="ml-[7px]">VOLUME: 108039.00</span>
                <Arrow up />
                <span className="ml-[9px]">MA5: 133196.09</span>
                <Arrow />
                <span className="ml-[9px] text-[#f0f000]">MA10: 217999.59</span>
                <Arrow up />
              </div>
              <VolumeChart />
            </div>
            <VolumeAxis />
          </div>

          {/* Date axis */}
          <div className="flex h-[24px] shrink-0 border-y-2 border-[#a00000] text-[18px] leading-none text-[#d02020]">
            <Cell w={300} className="border-r border-[#a00000] pl-[6px]">2022年</Cell>
            <Cell w={245} className="border-r border-[#a00000] pl-[4px]">4</Cell>
            <Cell w={140} className="pl-[4px]">5</Cell>
            <Cell w={116} className="justify-center bg-[#000080] text-[#c0c0f0]">2022/05/20/五</Cell>
            <Cell w={258} className="border-r border-[#a00000]" />
            <Cell w={270} className="border-r border-[#a00000] pl-[4px]">7</Cell>
            <Cell w={296} className="border-r border-[#a00000] pl-[4px]">8</Cell>
            <Cell w={86} className="border-r border-[#a00000] pl-[4px]">9</Cell>
            <Cell w={75} className="justify-center text-[#b8b8b8]">日线</Cell>
          </div>

          <Tabs items={tabs1}>
            <div className="ml-[710px] flex w-[83px] items-start justify-center border-x border-[#a00000] text-[#b0b0b0]">横版</div>
          </Tabs>
          <Tabs items={tabs2} />
        </div>

        <RightPanel />
        <Sidebar />
      </div>

      {/* Status bar */}
      <div className="flex h-[35px] shrink-0 items-center bg-[#f0f0f0] pt-[1px] text-[22px] leading-none whitespace-nowrap text-[#222]">
        <span className="ml-[3px] flex h-[19px] w-[19px] items-center justify-center rounded-[3px] bg-[#e8a838]">
          <span className="h-[11px] w-[11px] bg-[#f8e090]" />
        </span>
        <span className="ml-[3px] w-[45px] font-light">上证</span>
        <span className="ml-[8px] text-[21px] font-bold text-[#ff1010]">3243.45</span>
        <span className="ml-[26px] text-[21px] font-bold text-[#ff1010]">43.54</span>
        <span className="ml-[23px] text-[21px] font-bold text-[#ff1010]">1.36%</span>
        <span className="ml-[28px] text-[21px] font-bold text-[#111]">3786</span>
        <span className="font-light">亿</span>
        <span className="ml-[25px] w-[54px] font-light">深证</span>
        <span className="text-[21px] font-bold text-[#ff1010]">11799.8</span>
        <span className="ml-[20px] text-[21px] font-bold text-[#ff1010]">121.12</span>
        <span className="ml-[17px] text-[21px] font-bold text-[#ff1010]">1.04%</span>
        <span className="ml-[28px] text-[21px] font-bold text-[#111]">4905</span>
        <span className="font-light">亿</span>
        <span className="ml-[28px] w-[54px] font-light">中小</span>
        <span className="text-[21px] font-bold text-[#ff1010]">8017.98</span>
        <span className="ml-[20px] text-[21px] font-bold text-[#ff1010]">103.77</span>
        <span className="ml-[19px] text-[21px] font-bold text-[#ff1010]">1.31%</span>
        <span className="ml-[26px] text-[21px] font-bold text-[#111]">668.8</span>
        <span className="font-light">亿</span>
        <span className="ml-[20px] h-full border-l border-[#aaa] pl-[7px] leading-[35px] font-light">总成交</span>
        <span className="ml-[12px] text-[21px] font-bold text-[#111]">8</span>
      </div>

      <ImeBar />
      <Watermark />
    </div>
  );
}
